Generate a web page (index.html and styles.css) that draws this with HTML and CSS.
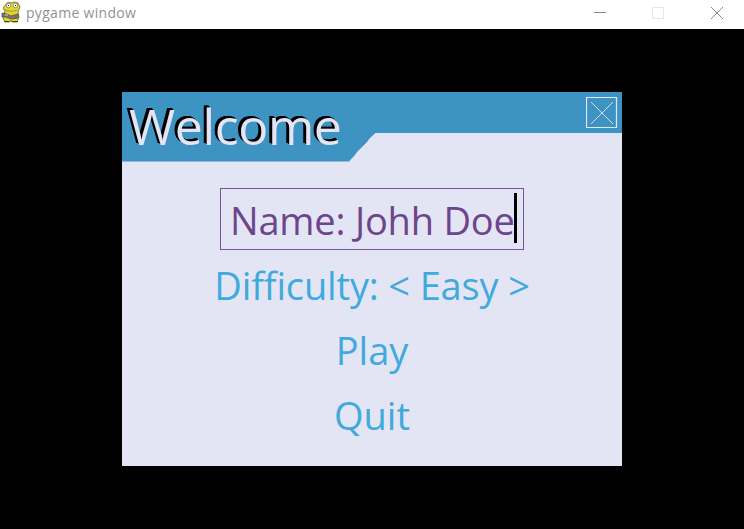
FILE: index.html
```html
<!DOCTYPE html>
<html lang="en">
<head>
<meta charset="utf-8">
<title>pygame window</title>
<link rel="stylesheet" href="styles.css">
</head>
<body>
<header class="titlebar">
  <svg class="app-icon" viewBox="0 0 22 24" width="22" height="24"><path d="M6 4Q8 1 11 3Q14 1 18 3L20 7 18 12 19 17 17 22H12L11 20 10 22H5L3 18 5 11 3 8Z" fill="#e3d52c" stroke="#6b6520" stroke-width=".8"/><path d="M4 9Q9 13 17 10" fill="none" stroke="#a89c20"/><circle cx="8.500" cy="5.500" r="2.300" fill="#f4f4ee" stroke="#77756a" stroke-width=".7"/><circle cx="15.500" cy="5.500" r="2.300" fill="#f4f4ee" stroke="#77756a" stroke-width=".7"/><path d="M8 5h1v1H8ZM15 5h1v1h-1Z" fill="#222"/><path d="M2 13L7 14 11 16 18 14V18L11 19 6 17 2 17Z" fill="#77777a" stroke="#444" stroke-width=".7"/><path d="M5 15H8" stroke="#ccc"/><path d="M14 17H16" stroke="#b6453a"/><path d="M4 21.500H9M12 21.500H18" stroke="#4a4618"/></svg>
  <span class="app-title">pygame window</span>
  <svg class="controls" viewBox="0 0 164 29" width="164" height="29" fill="none"><path d="M14 12.500H26" stroke="#888"/><path d="M72.500 7.500H83.500V18.500H72.500Z" stroke="#e6e6e6"/><path d="M131 7L143 19M143 7L131 19" stroke="#888"/></svg>
</header>
<main class="stage">
  <section class="menu">
    <header class="menu-head">
      <svg class="bar" viewBox="0 0 500 70" width="500" height="70"><path d="M0 0H500V41H253.500L248 46 245 50 235 60 233 63 227 69.500H0Z" fill="#3d94c3"/></svg>
      <h1 class="title">Welcome</h1>
      <svg class="close" viewBox="0 0 32 32" width="32" height="32" fill="none" stroke="#e4e5f4"><path d="M.5 .5H30.500V30.500H.5Z" stroke-width="1.200"/><path d="M5 5L27 27M27 5L5 27" stroke-width=".9"/></svg>
    </header>
    <div class="items">
      <div class="item selected"><span class="label">Name: Johh Doe</span><i class="cursor"></i></div>
      <div class="item difficulty"><span class="label">Difficulty: &lt; Easy &gt;</span></div>
      <div class="item"><span class="label">Play</span></div>
      <div class="item"><span class="label">Quit</span></div>
    </div>
  </section>
</main>
</body>
</html>
```
FILE: styles.css
```css
* { box-sizing: border-box; }
body { margin: 0; width: 744px; height: 529px; overflow: hidden; background: #000; font-family: "Open Sans", sans-serif; }
.titlebar { height: 29px; background: #fff; display: flex; align-items: flex-start; }
.app-title { font-size: 14px; line-height: 26px; letter-spacing: .3px; color: #929292; margin-left: 4px; flex: 1; }
.stage { height: 500px; padding: 63px 122px; background: #000; }
.menu { width: 500px; height: 374px; background: #e4e5f4; }
.menu-head { position: relative; height: 70px; }
.bar { display: block; }
.title { position: absolute; left: 7px; top: -1px; margin: 0; font-size: 50px; line-height: 70px; font-weight: 400; letter-spacing: -.4px; color: #e4e5f4; text-shadow: -1px -1px #000, -2px -2px #000, -3px -2px #000; white-space: nowrap; }
.close { position: absolute; left: 464px; top: 5px; }
.items { display: flex; flex-direction: column; align-items: center; padding-top: 26px; gap: 3px; }
.item { height: 62px; line-height: 64px; font-size: 38px; color: #41aadc; white-space: nowrap; }
.difficulty { letter-spacing: -.15px; }
.selected { position: relative; width: 304px; line-height: 62px; padding-left: 9px; letter-spacing: -.2px; border: 1px solid #7a5597; color: #6c458b; }
.cursor { position: absolute; right: 6px; top: 4px; width: 3px; height: 50px; background: #000; }
```
